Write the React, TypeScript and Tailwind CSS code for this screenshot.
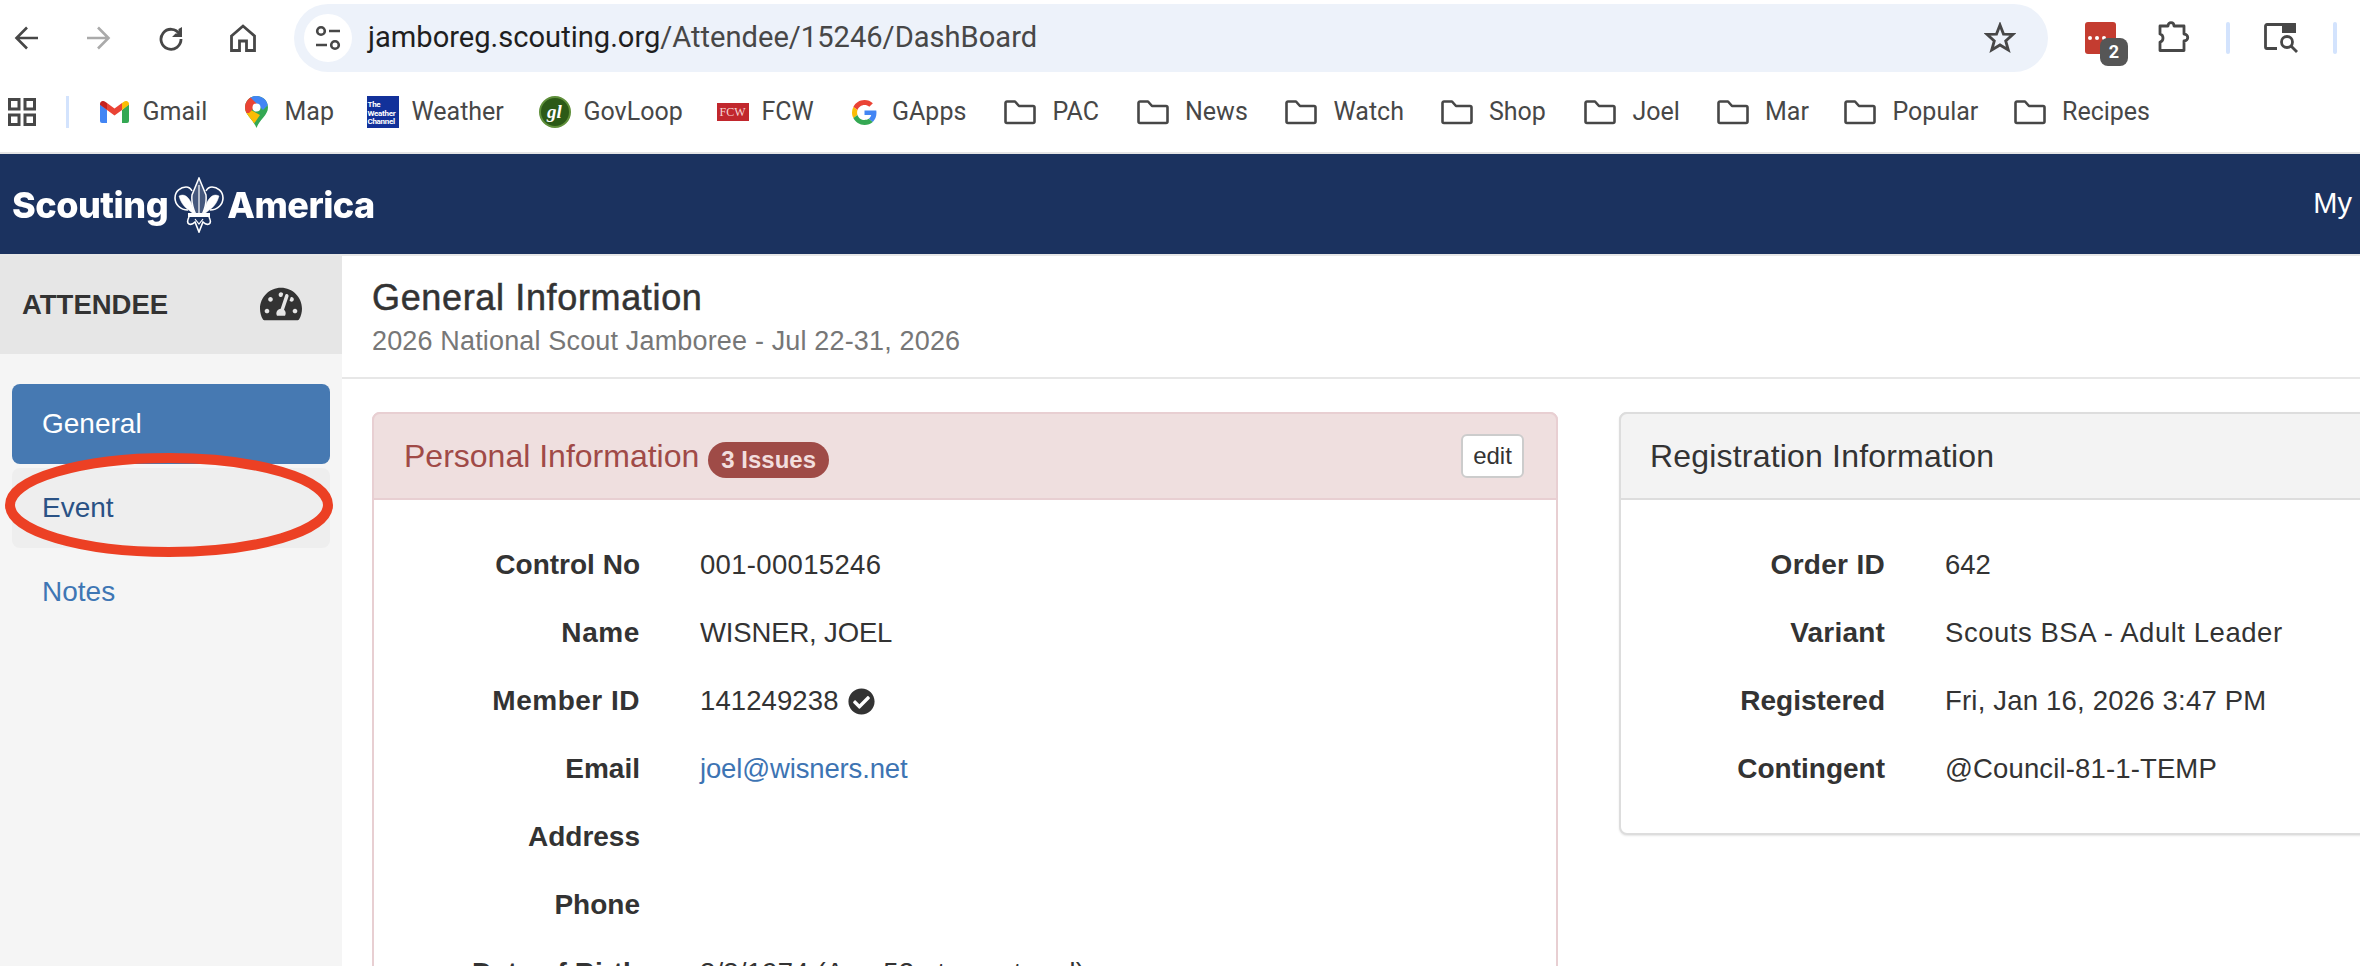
import { FaTachometerAlt, FaCheckCircle } from 'react-icons/fa';
import type { ReactNode } from 'react';

function Folder() {
    return (
        <svg width="32" height="25" viewBox="0 0 32 25" fill="none" stroke="#474747" strokeWidth="2.6" strokeLinejoin="round" className="shrink-0">
            <path d="M1.5 3a1.5 1.5 0 0 1 1.5-1.5h8l4 4.5h14a1.5 1.5 0 0 1 1.5 1.5v14a1.5 1.5 0 0 1-1.5 1.5H3a1.5 1.5 0 0 1-1.5-1.5z" />
        </svg>
    );
}

function GmailIcon() {
    return (
        <svg width="29" height="22" viewBox="0 0 29 22" className="shrink-0">
            <path fill="#4285f4" d="M0 3v17a2 2 0 0 0 2 2h5V9z" />
            <path fill="#34a853" d="M29 3v17a2 2 0 0 1-2 2h-5V9z" />
            <path fill="#ea4335" d="M7 9l7.5 5.6L22 9V2l-7.500 5.600L7 2z" />
            <path fill="#fbbc04" d="M22 2v7l7-5.200V3c0-2.500-2.800-3.900-4.800-2.400z" />
            <path fill="#c5221f" d="M0 3.800L7 9V2L4.800.6C2.800-.9 0 .5 0 3z" />
        </svg>
    );
}

function MapIcon() {
    return (
        <svg width="23" height="32" viewBox="0 0 23 32" className="shrink-0">
            <defs>
                <clipPath id="pin">
                    <path d="M11.500 0C5 0 0 5 0 11.500 0 19 8 23 11.500 32 15 23 23 19 23 11.500 23 5 18 0 11.500 0z" />
                </clipPath>
            </defs>
            <g clipPath="url(#pin)">
                <rect width="23" height="32" fill="#34a853" />
                <path fill="#fbbc04" d="M0 14h6l9 5L6 32H0z" />
                <path fill="#ea4335" d="M0 0h5l8 8-9 9H0z" />
                <path fill="#4285f4" d="M4 0h19v9l-5 5-9-9z" />
            </g>
            <circle cx="11.500" cy="11.500" r="4" fill="#fff" />
        </svg>
    );
}

function GoogleG() {
    return (
        <svg width="25" height="25" viewBox="0 0 48 48" className="shrink-0">
            <path fill="#EA4335" d="M24 9.500c3.540 0 6.710 1.220 9.210 3.600l6.850-6.850C35.900 2.380 30.470 0 24 0 14.620 0 6.510 5.380 2.560 13.220l7.980 6.190C12.430 13.720 17.740 9.500 24 9.500z" />
            <path fill="#4285F4" d="M46.980 24.550c0-1.570-.15-3.090-.38-4.550H24v9.020h12.940c-.58 2.960-2.260 5.480-4.780 7.180l7.730 6c4.510-4.180 7.090-10.360 7.090-17.650z" />
            <path fill="#FBBC05" d="M10.530 28.590c-.48-1.450-.76-2.990-.76-4.590s.27-3.140.76-4.590l-7.980-6.190C.92 16.460 0 20.120 0 24c0 3.880.92 7.540 2.560 10.780l7.970-6.190z" />
            <path fill="#34A853" d="M24 48c6.480 0 11.930-2.130 15.890-5.810l-7.730-6c-2.150 1.450-4.920 2.300-8.160 2.300-6.260 0-11.570-4.220-13.470-9.910l-7.980 6.190C6.510 42.620 14.620 48 24 48z" />
        </svg>
    );
}

function WeatherIcon() {
    return (
        <div className="w-8 h-8 shrink-0 bg-[#12319a] text-white font-bold text-[8px] leading-[8.5px] pl-[1px] pt-[5px] overflow-hidden tracking-[-0.3px]">
            The<br />Weather<br />Channel
        </div>
    );
}

function GovLoopIcon() {
    return (
        <div className="w-8 h-8 shrink-0 rounded-full bg-[#2c5a17] text-white font-bold italic text-[19px] leading-[28px] text-center border-2 border-[#5f8f3a] font-['Liberation_Serif',serif]">
            gl
        </div>
    );
}

function FcwIcon() {
    return (
        <div className="w-8 h-[18px] shrink-0 bg-[#c1272d] text-[#f6d5d5] text-[12px] leading-[18px] text-center font-['Liberation_Serif',serif]">
            FCW
        </div>
    );
}

function Fleur() {
    return (
        <svg width="50" height="56" viewBox="0 0 50 56" fill="none" stroke="#fff" className="shrink-0 ml-[6px] mr-[3px]">
            <path strokeWidth="1.500" fill="#ffffff30" d="M25 1l7 17q1 10-4 20h-6q-5-10-4-20z" />
            <path strokeWidth="1.200" d="M25 8v30" />
            <path strokeWidth="1.600" d="M14 33C6 33 1 27 1 21 1 14 7 10 12 10c3 0 5 2 6 4" />
            <path fill="#fff" strokeWidth="0.500" d="M5 19c6-3 12 1 16 19-7-6-13-8-16-19z" />
            <g transform="matrix(-1 0 0 1 50 0)">
                <path strokeWidth="1.600" d="M14 33C6 33 1 27 1 21 1 14 7 10 12 10c3 0 5 2 6 4" />
                <path fill="#fff" strokeWidth="0.500" d="M5 19c6-3 12 1 16 19-7-6-13-8-16-19z" />
            </g>
            <path fill="#fff" strokeWidth="0" d="M14 36h22v4H14z" />
            <path strokeWidth="1.600" d="M15 40c-4 8 2 9 6 5l4 10 4-10c4 4 10 3 6-5" />
            <path strokeWidth="1.200" d="M21 42l4 5 4-5" />
        </svg>
    );
}

const bookmarks: { icon: ReactNode; label: string; labelClass: string }[] = [
    { icon: <GmailIcon />, label: 'Gmail', labelClass: 'ml-[13.5px] w-[65px]' },
    { icon: <MapIcon />, label: 'Map', labelClass: 'ml-[17px] w-[45px]' },
    { icon: <WeatherIcon />, label: 'Weather', labelClass: 'ml-[13px] w-[90px]' },
    { icon: <GovLoopIcon />, label: 'GovLoop', labelClass: 'ml-[13px] w-[96px]' },
    { icon: <FcwIcon />, label: 'FCW', labelClass: 'ml-[13px] w-[53px]' },
    { icon: <GoogleG />, label: 'GApps', labelClass: 'ml-[15.5px] w-[75px]' },
    { icon: <Folder />, label: 'PAC', labelClass: 'ml-[16.5px] w-[47px]' },
    { icon: <Folder />, label: 'News', labelClass: 'ml-[16.5px] w-[63px]' },
    { icon: <Folder />, label: 'Watch', labelClass: 'ml-[16.5px] w-[70px]' },
    { icon: <Folder />, label: 'Shop', labelClass: 'ml-[16.5px] w-[58px]' },
    { icon: <Folder />, label: 'Joel', labelClass: 'ml-[16.5px] w-[47px]' },
    { icon: <Folder />, label: 'Mar', labelClass: 'ml-[16.5px] w-[42px]' },
    { icon: <Folder />, label: 'Popular', labelClass: 'ml-[16.5px] w-[84px]' },
    { icon: <Folder />, label: 'Recipes', labelClass: 'ml-[16.5px] w-[88px]' },
];

function Toolbar() {
    return (
        <div className="h-[76px] flex items-center pl-[14px] text-[#474747]">
            {/* Back, forward, reload, home */}
            <svg width="24" height="24" viewBox="0 0 24 24" fill="none" stroke="#474747" strokeWidth="2.600" className="shrink-0">
                <path d="M24 12H3M13 1.500L2.500 12 13 22.500" />
            </svg>
            <svg width="24" height="24" viewBox="0 0 24 24" fill="none" stroke="#aaaaaa" strokeWidth="2.600" className="shrink-0 ml-[49px]">
                <path d="M0 12h21M11 1.500L21.500 12 11 22.500" />
            </svg>
            <svg width="25" height="25" viewBox="0 0 25 25" fill="none" stroke="#474747" strokeWidth="2.800" className="shrink-0 ml-[47px]">
                <path d="M21.500 8A10 10 0 1 0 23 13" />
                <path fill="#474747" stroke="none" d="M24 1v10h-10l3.500-3.500h3V3z" />
            </svg>
            <svg width="26" height="28" viewBox="0 0 26 28" fill="none" stroke="#474747" strokeWidth="2.800" className="shrink-0 ml-[47px]">
                <path d="M1.500 12L13 2l11.500 10v14.500h-8V17h-7v9.500h-8z" />
            </svg>

            {/* Address bar */}
            <div className="ml-[38px] w-[1754px] h-[68px] rounded-[34px] bg-[#edf2fa] flex items-center pl-[10px] pr-[32px] shrink-0">
                <div className="w-12 h-12 rounded-full bg-white flex items-center justify-center shrink-0">
                    <svg width="26" height="26" viewBox="0 0 26 26" fill="none" stroke="#474747" strokeWidth="2.600" className="shrink-0">
                        <circle cx="6" cy="6" r="3.800" />
                        <path d="M14 6h11M1 20h11" />
                        <circle cx="20" cy="20" r="3.800" />
                    </svg>
                </div>
                <div className="ml-4 text-[29.1px] font-['Roboto',sans-serif] text-[#474747] whitespace-nowrap">
                    <span className="text-[#1f1f1f]">jamboreg.scouting.org</span>/Attendee/15246/DashBoard
                </div>
                <svg width="32" height="32" viewBox="0 0 32 32" fill="none" stroke="#474747" strokeWidth="2.800" strokeLinejoin="miter" className="ml-auto shrink-0">
                    <polygon points="16,3 19.500,12.100 29,12.400 21.700,18.900 24.300,28 16,23 7.700,28 10.300,18.900 3,12.400 12.500,12.100" />
                </svg>
            </div>

            {/* Extensions */}
            <div className="relative ml-[37px] w-[31px] h-8 rounded-[3px] bg-[#c43c30] shrink-0 flex items-center pl-[3px] gap-[3px]">
                <span className="w-[4px] h-[4px] rounded-full bg-white" />
                <span className="w-[4px] h-[4px] rounded-full bg-white" />
                <span className="w-[4px] h-[4px] rounded-full bg-white" />
                <span className="absolute left-[15px] top-4 w-7 h-7 rounded-[8px] bg-[#565656] text-white text-[18px] font-bold leading-7 text-center font-['Roboto',sans-serif]">
                    2
                </span>
            </div>
            <svg width="32" height="32" viewBox="0 0 32 32" fill="none" stroke="#474747" strokeWidth="2.800" strokeLinejoin="round" className="ml-[42px] shrink-0 -translate-y-[2px]">
                <path d="M2 6h8c0-4.500 6-4.500 6 0h10v8c5 0 5 7 0 7v9.500H2V22c4-1 4-7 0-8z" />
            </svg>
            <div className="ml-[36px] w-1 h-8 rounded-sm bg-[#d3e3fd] shrink-0" />
            <svg width="34" height="30" viewBox="0 0 34 30" fill="none" stroke="#474747" strokeWidth="2.800" className="ml-[34px] shrink-0">
                <path d="M18 1.500H3a1.500 1.500 0 0 0-1.500 1.500v21a1.500 1.500 0 0 0 1.500 1.500h10" />
                <path fill="#474747" stroke="none" d="M18 0h12a2 2 0 0 1 2 2v8H18z" />
                <path d="M18 1.500h12.500V8" />
                <circle cx="23" cy="19" r="5.500" />
                <path d="M27 23l6 6" />
            </svg>
            <div className="ml-[35px] w-1 h-8 rounded-sm bg-[#d3e3fd] shrink-0" />
        </div>
    );
}

function BookmarkBar() {
    return (
        <div className="h-[76px] flex items-center pl-2 pb-[4px] font-['Roboto',sans-serif] text-[25px] text-[#474747] whitespace-nowrap">
            <svg width="28" height="28" viewBox="0 0 28 28" fill="none" stroke="#474747" strokeWidth="3" className="shrink-0">
                <rect x="1.500" y="1.500" width="9.500" height="9.500" />
                <rect x="17" y="1.500" width="9.500" height="9.500" />
                <rect x="1.500" y="17" width="9.500" height="9.500" />
                <rect x="17" y="17" width="9.500" height="9.500" />
            </svg>
            <div className="ml-[30px] mr-[31px] w-[3px] h-8 bg-[#d3e3fd] shrink-0" />
            <div className="flex items-center gap-[37px]">
                {bookmarks.map((b) => (
                    <div key={b.label} className="flex items-center">
                        {b.icon}
                        <span className={b.labelClass}>{b.label}</span>
                    </div>
                ))}
            </div>
        </div>
    );
}

function Navbar() {
    return (
        <div className="h-[104px] bg-[#1b325f] border-t-2 border-b-2 border-t-[#e5e5e5] border-b-[#e7e7e7] flex items-center pl-3 pr-2 text-white">
            <div className="flex items-center font-['Inter',sans-serif] font-extrabold text-[36px] tracking-[-0.5px] blur-[0.4px] translate-y-[1px]">
                <span>Scouting</span>
                <Fleur />
                <span>America</span>
            </div>
            <span className="ml-auto text-[29px]">My</span>
        </div>
    );
}

function Sidebar() {
    return (
        <div className="relative w-[342px] shrink-0 bg-[#f5f5f5] text-[28px]">
            <div className="h-[98px] bg-[#e6e6e6] flex items-center justify-between pl-[22px] pr-10 font-bold text-[27.5px] text-[#333333]">
                ATTENDEE
                <FaTachometerAlt className="text-[42px] -translate-y-[1px]" />
            </div>
            <nav className="flex flex-col gap-1 px-3 pt-[30px]">
                <a className="h-20 rounded-lg bg-[#4679b2] text-white flex items-center pl-[30px]">General</a>
                <a className="h-20 rounded-lg bg-[#eeeeee] text-[#2a5285] flex items-center pl-[30px]">Event</a>
                <a className="h-20 rounded-lg text-[#3e76b4] flex items-center pl-[30px]">Notes</a>
            </nav>
            {/* Red annotation circled on the screenshot */}
            <svg width="330" height="106" viewBox="0 0 330 106" fill="none" className="absolute left-[5px] top-[196px]">
                <ellipse cx="164" cy="53" rx="159" ry="47" stroke="#ec4024" strokeWidth="10" />
            </svg>
        </div>
    );
}

function Row({ label, children, labelW, labelClass }: { label: string; children?: ReactNode; labelW: string; labelClass?: string }) {
    return (
        <div className="flex items-center h-[68px] gap-[60px] whitespace-nowrap text-[27.5px]">
            <div className={`${labelW} shrink-0 text-right font-bold text-[28px] ${labelClass ?? ''}`}>{label}</div>
            <div className="flex items-center gap-[9px]">{children}</div>
        </div>
    );
}

function PersonalPanel() {
    return (
        <div className="w-[1186px] shrink-0 rounded-lg border-2 border-[#e8cfd2] bg-white">
            <div className="h-[88px] -mx-[2px] -mt-[2px] pl-[30px] pr-[32px] rounded-t-lg bg-[#efdfdf] border-2 border-[#e8cfd2] flex items-center text-[#a04a47]">
                <span className="text-[32px]">Personal Information</span>
                <span className="ml-[9px] h-9 px-[13px] rounded-[18px] bg-[#9f4b47] text-[#f2dede] text-[24px] font-bold flex items-center translate-y-[4px]">
                    3 Issues
                </span>
                <button className="ml-auto w-[63px] h-[44px] rounded-md border-2 border-[#cccccc] bg-white text-[#333333] text-[24px] leading-none">
                    edit
                </button>
            </div>
            <div className="pt-[31px]">
                <Row label="Control No" labelW="w-[266px]"><span className="tracking-[0.33px]">001-00015246</span></Row>
                <Row label="Name" labelW="w-[266px]" labelClass="tracking-[0.6px]"><span className="tracking-[-0.15px]">WISNER, JOEL</span></Row>
                <Row label="Member ID" labelW="w-[266px]" labelClass="tracking-[0.5px]">
                    <span className="tracking-[0.1px]">141249238</span> <FaCheckCircle className="text-[27px]" />
                </Row>
                <Row label="Email" labelW="w-[266px]">
                    <a className="text-[#3d74b3] tracking-[-0.15px]">joel@wisners.net</a>
                </Row>
                <Row label="Address" labelW="w-[266px]" />
                <Row label="Phone" labelW="w-[266px]" />
                <Row label="Date of Birth" labelW="w-[266px]"><span className="tracking-[0.2px]">3/3/1974 (Age 52 at event end)</span></Row>
            </div>
        </div>
    );
}

function RegistrationPanel() {
    return (
        <div className="w-[1186px] shrink-0 self-start rounded-lg border-2 border-[#dddddd] bg-white pb-[30px] shadow-[0_1px_2px_rgba(0,0,0,0.1)]">
            <div className="h-[88px] -mx-[2px] -mt-[2px] pl-[29px] rounded-t-lg bg-[#f3f3f3] border-2 border-[#dddddd] flex items-center text-[32px] tracking-[0.19px]">
                Registration Information
            </div>
            <div className="pt-[31px]">
                <Row label="Order ID" labelW="w-[264px]" labelClass="tracking-[0.3px]">642</Row>
                <Row label="Variant" labelW="w-[264px]" labelClass="tracking-[0.2px]"><span className="tracking-[0.54px]">Scouts BSA - Adult Leader</span></Row>
                <Row label="Registered" labelW="w-[264px]"><span className="tracking-[0.2px]">Fri, Jan 16, 2026 3:47 PM</span></Row>
                <Row label="Contingent" labelW="w-[264px]"><span className="tracking-[0.14px]">@Council-81-1-TEMP</span></Row>
            </div>
        </div>
    );
}

export default function App() {
    return (
        <div className="w-[2360px] h-[966px] overflow-hidden bg-white font-['Liberation_Sans',sans-serif] text-[#333333]">
            <Toolbar />
            <BookmarkBar />
            <Navbar />
            <div className="flex h-[710px]">
                <Sidebar />
                <main className="flex-1 min-w-0 overflow-hidden text-[27px]">
                    <div className="h-[123px] border-b-2 border-[#e7e7e7] pl-[30px] pt-[20px]">
                        <h1 className="text-[36px] leading-[44px] [-webkit-text-stroke:0.5px_#333333] tracking-[0.65px]">General Information</h1>
                        <p className="text-[27px] leading-[42px] text-[#777777] tracking-[0.16px]">2026 National Scout Jamboree - Jul 22-31, 2026</p>
                    </div>
                    <div className="flex gap-[61px] pl-[30px] pt-[33px]">
                        <PersonalPanel />
                        <RegistrationPanel />
                    </div>
                </main>
            </div>
        </div>
    );
}
